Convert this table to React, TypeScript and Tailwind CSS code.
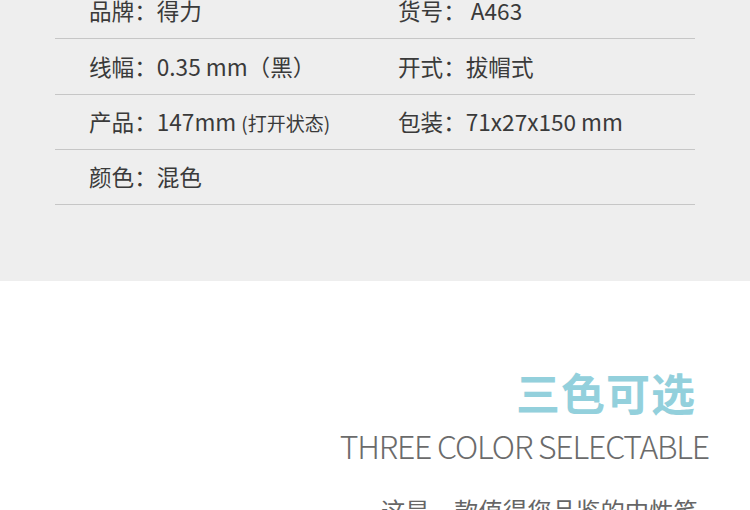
const specs = [
  [{ label: "品牌：", value: "得力" }, { label: "货号：", value: " A463" }],
  [{ label: "线幅：", value: "0.35 mm（黑）" }, { label: "开式：", value: "拔帽式" }],
  [{ label: "产品：", value: "147mm", note: "(打开状态)" }, { label: "包装：", value: "71x27x150 mm" }],
  [{ label: "颜色：", value: "混色" }, null],
];

type Cell = { label: string; value: string; note?: string } | null;

function SpecCell({ cell }: { cell: Cell }) {
  if (!cell) return <div />;
  return (
    <div className="whitespace-pre">
      {cell.label}
      {cell.value}
      {cell.note && <span className="ml-[5px] text-[19px]">{cell.note}</span>}
    </div>
  );
}

export default function App() {
  return (
    <div
      className="w-[750px] h-[510px] overflow-hidden bg-white"
      style={{ fontFamily: '"Noto Sans CJK SC", "Noto Sans", sans-serif' }}
    >
      {/* Spec table */}
      <div className="h-[281px] bg-[#eeeeee] overflow-hidden">
        <div className="mx-[55px] -mt-[16px]">
          {specs.map((row, i) => (
            <div
              key={i}
              className="h-[55.33px] grid grid-cols-[309px_1fr] items-center pl-[34px] border-b border-[#c6c6c6] text-[22.6px] text-[#3a3a3a]"
            >
              <SpecCell cell={row[0]} />
              <SpecCell cell={row[1]} />
            </div>
          ))}
        </div>
      </div>

      {/* Color section */}
      <div className="flex flex-col items-end">
        <h2 className="mt-[81px] mr-[54px] text-[44px] leading-[60px] font-bold text-[#93d0dc] tracking-[1px]">
          三色可选
        </h2>
        <p className="mt-[1px] mr-[41px] text-[32px] leading-[44px] font-light tracking-[-1.2px] text-[#6b6b6b]">
          THREE COLOR SELECTABLE
        </p>
        <p className="mt-[26px] mr-[52px] text-[24.4px] leading-[34px] text-[#666666]">
          这是一款值得您品鉴的中性笔
        </p>
      </div>
    </div>
  );
}
